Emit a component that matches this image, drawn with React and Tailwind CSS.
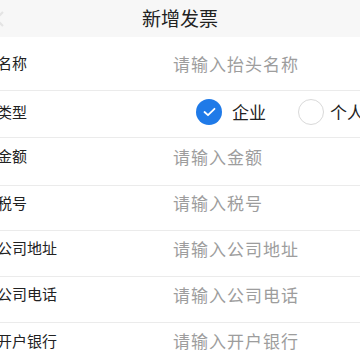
import React from "react";

const font = { fontFamily: '"Noto Sans CJK SC", "Noto Sans", sans-serif' };

function Row({ label, placeholder, h = "h-[46px]", pb = "pb-[10px]", border = true }) {
  return (
    <div className={`flex items-center ${h} ${pb} ${border ? "border-b border-[#ebebeb]" : ""}`}>
      <div className="ml-[-3px] w-[176px] shrink-0 text-[15px] text-[#222] whitespace-nowrap">{label}</div>
      <div className="text-[17px] tracking-[1px] text-[#9d9d9d] whitespace-nowrap">{placeholder}</div>
    </div>
  );
}

export default function App() {
  return (
    <div className="w-[360px] h-[360px] overflow-hidden bg-white" style={font}>
      <div className="relative h-[37px] bg-[#f7f7f7] flex items-center justify-center">
        <svg className="absolute left-[-6px] top-[11px]" width="12" height="16" viewBox="0 0 12 16">
          <path d="M9 1 L2 8 L9 15" stroke="#e4e4e4" strokeWidth="2" fill="none" />
        </svg>
        <span className="text-[19px] text-[#222]">新增发票</span>
      </div>
      <Row label="名称" placeholder="请输入抬头名称" h="h-[54px]" pb="pb-0" />
      <div className="flex items-center h-[47px] pb-[4px] border-b border-[#ebebeb]">
        <div className="ml-[-3px] w-[176px] shrink-0 text-[15px] text-[#222] whitespace-nowrap">类型</div>
        <div className="flex items-center ml-[23px] whitespace-nowrap">
          <div className="w-[26px] h-[26px] rounded-full bg-[#1f7ae8] flex items-center justify-center">
            <svg width="13" height="10" viewBox="0 0 13 10">
              <path d="M1.5 5 L5 8.2 L11.5 1.8" stroke="#fff" strokeWidth="1.8" fill="none" strokeLinecap="round" strokeLinejoin="round" />
            </svg>
          </div>
          <span className="ml-[10px] text-[17px] text-[#222]">企业</span>
          <div className="ml-[32px] w-[26px] h-[26px] rounded-full border border-[#d9d9d9] bg-white" />
          <span className="ml-[6px] text-[17px] text-[#222]">个人</span>
        </div>
      </div>
      <Row label="金额" placeholder="请输入金额" h="h-[48px]" />
      <Row label="税号" placeholder="请输入税号" h="h-[45px]" />
      <Row label="公司地址" placeholder="请输入公司地址" h="h-[46px]" />
      <Row label="公司电话" placeholder="请输入公司电话" h="h-[46px]" />
      <Row label="开户银行" placeholder="请输入开户银行" h="h-[46px]" border={false} />
    </div>
  );
}
